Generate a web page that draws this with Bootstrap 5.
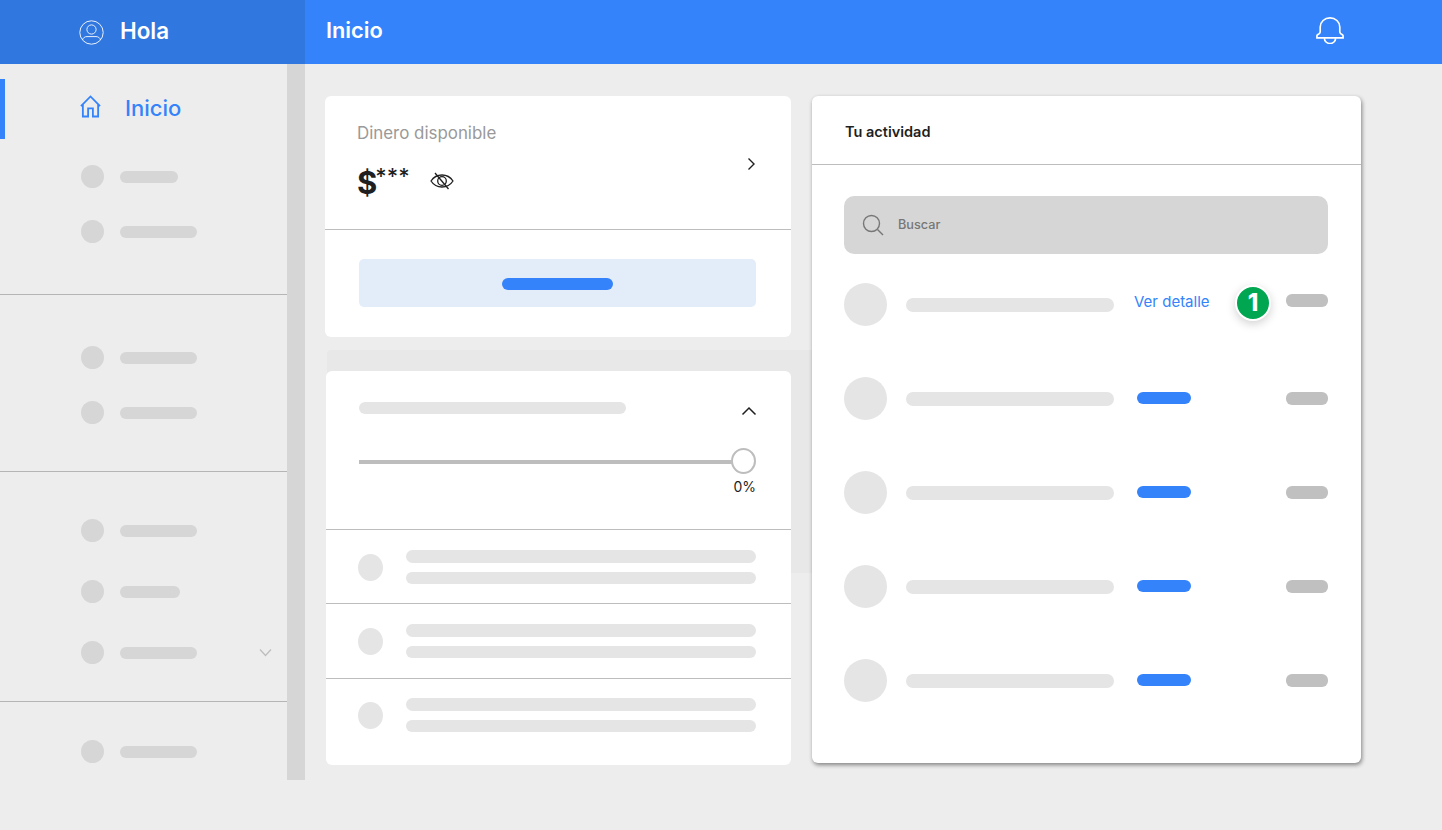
<!DOCTYPE html>
<html lang="es">
<head>
<meta charset="utf-8">
<title>Inicio</title>
<link href="https://cdn.jsdelivr.net/npm/bootstrap@5.3.0/dist/css/bootstrap.min.css" rel="stylesheet">
<style>
body{background:#ededed;font-family:"Inter","Liberation Sans",sans-serif;color:#1f1f1f;height:830px;overflow:hidden}
.topbar{height:64px;background:#3483fa;flex-wrap:nowrap;justify-content:flex-start}
.top-left{width:305px;height:64px;background:#3077e0;padding-left:79px;gap:16px}
.top-left span{font-size:22.4px;font-weight:600;color:#fff;line-height:26px;margin-bottom:2px}
.top-title{font-size:21.8px;font-weight:600;color:#fff;margin-left:21px;line-height:26px;margin-bottom:4px}
.bell{margin-left:auto;margin-right:98px;display:block;margin-bottom:3px}
.sidecol{width:305px;height:716px;flex:none}
.sidenav{width:287px}
.scrolltrack{width:18px;background:#d6d6d6}
.active-item{height:60px;margin-top:15px;border-left:5px solid #3483fa;padding-left:75px;color:#3483fa;font-size:22px;font-weight:500}
.active-item svg{margin-bottom:5px}
.active-item span{margin-left:24px;line-height:26px;margin-bottom:2px}
.side-sec{padding-left:81px;display:flex;flex-direction:column;border-bottom:1px solid #b5b5b5}
.side-sec:last-child{border-bottom:0}
.s1{padding-top:26px;padding-bottom:51px;gap:32px}
.s2{padding-top:51px;padding-bottom:47px;gap:32px}
.s3{padding-top:47px;padding-bottom:37px;gap:38px}
.s4{padding-top:38px}
.side-dot{width:23px;height:23px;border-radius:50%;background:#d6d6d6;flex:none}
.side-pill{height:12px;border-radius:6px;background:#d6d6d6;margin-left:16px}
.w58{width:58px}.w60{width:60px}.w77{width:77px}
.side-chev{position:absolute;left:178px;top:7px}
.maincol{padding:32px 0 0 20px}
.leftcol{width:466px;margin-right:21px;position:relative}
.leftcol::before{content:"";position:absolute;left:2px;top:254px;width:485px;height:223px;background:#e8e8e8;border-radius:4px 0 0 0}
.sheet{position:relative;background:#fff;border:0;border-radius:6px}
.sheet-a{height:241px}
.bal{height:134px;border-bottom:1px solid #bdbdbd;padding:27px 35px 0 32px;position:relative}
.bal-label{font-size:16.9px;line-height:20px;color:#999}
.bal-amount{margin-top:18px;line-height:36px;height:36px}
.bal-sign{font-size:31px;font-weight:700;color:#1f1f1f;line-height:36px;margin-top:7px}
.bal-stars{font-size:22px;font-weight:500;line-height:36px;align-self:flex-start;margin-top:-3px;margin-left:-2px}
.bal-eye{margin-left:20px;margin-top:3px}
.bal-chev{position:absolute;right:35px;top:61px}
.bal-foot{padding:29px 35px 0 34px}
.soft-btn{height:48px;background:#e3edf9;border:0;border-radius:5px;width:100%;display:flex;align-items:center;justify-content:center;padding:1px 0 0}
.blue-pill{background:#3483fa;border-radius:6px;height:12px;display:block}
.w110{width:111px}
.sheet-b{height:394px;margin-top:34px;margin-left:1px}
.goal{height:159px;padding:31px 35px 0 33px;position:relative;border-bottom:1px solid #bdbdbd}
.gray-pill{background:#e5e5e5;border-radius:7px;display:block}
.goal-title{width:267px;height:12px}
.goal-chev{position:absolute;left:415px;top:35px}
.track{height:4px;background:#bdbdbd;margin-top:46px;margin-right:23px;position:relative}
.thumb{position:absolute;left:372px;top:-12px;width:25px;height:26px;border:2px solid #bdbdbd;border-radius:50%;background:#fff}
.pct{font-size:14px;line-height:20px;margin-top:13px;color:#1f1f1f;text-align:right}
.goal-row{height:74px;padding:20px 35px 0 32px;border-bottom:1px solid #bdbdbd;background:transparent;border-radius:0}
.goal-row:nth-child(2){height:75px}
.goal-row:last-child{border-bottom:0;border-radius:0 0 6px 6px;padding-top:19px}
.oval{width:25px;height:27px;border-radius:50%;background:#e5e5e5;flex:none;margin-top:4px}
.lines{margin-left:23px;gap:9px}
.l13{height:13px}.l12{height:12px}
.sheet-c{width:549px;height:667px;box-shadow:1px 2px 4px rgba(0,0,0,.45)}
.act-head{height:69px;border-bottom:1px solid #bdbdbd;padding:27px 0 0 33px;font-size:14.5px;line-height:18px;font-weight:600;color:#1f1f1f}
.act-body{padding:31px 33px 0 32px;position:relative}
.searchbox{height:58px;background:#d6d6d6;border-radius:10px;padding-left:18px;margin-bottom:29px}
.searchbox span{font-size:12.7px;font-weight:500;color:#777;margin-left:14px;line-height:16px}
.act-row{height:43px;margin-bottom:51px;position:relative}
.round43{width:43px;height:43px;border-radius:50%;background:#e5e5e5;flex:none}
.act-line{width:208px;height:14px;margin-left:19px}
.act-blue{width:54px;height:12px;margin-left:23px;margin-bottom:1px}
.act-gray{width:42px;height:13px;border-radius:6px;background:#c0c0c0;margin-left:auto}
.up-gray{margin-bottom:8px}
.detail{font-size:15px;line-height:20px;color:#3483fa;margin-left:20px;margin-bottom:5px;text-decoration:none}
.step{position:absolute;left:391px;top:2px;width:36px;height:36px;border-radius:50%;background:#00a650;border:2px solid #fff;color:#fff;font-size:24px;font-weight:800;line-height:31px;text-align:center;box-shadow:0 3px 10px rgba(0,0,0,.18)}
</style>
</head>
<body>
<nav class="navbar topbar p-0">
  <div class="top-left d-flex align-items-center">
    <svg width="25" height="25" viewBox="0 0 25 25" fill="none" stroke="#fff" stroke-width="1" opacity=".9"><circle cx="12.5" cy="12.5" r="11.7"/><circle cx="12.5" cy="9.5" r="4.6"/><path d="M3.5 20c.6-2.4 2.400-3.400 4.500-3.400h9c2.100 0 3.900 1 4.500 3.400"/></svg>
    <span>Hola</span>
  </div>
  <div class="top-title">Inicio</div>
  <svg class="bell" width="28" height="27" viewBox="0 0 30 31" preserveAspectRatio="none" fill="none" stroke="#fff" stroke-width="1.800"><path d="M4.500 17V11.500a10.500 10.500 0 0 1 21 0V17c0 1 .5 1.700 1.300 2.300.9.700 2.200 1.300 2.200 2.200v2.500H1v-2.500c0-.9 1.300-1.500 2.200-2.200.8-.6 1.300-1.300 1.300-2.300z"/><path d="M9 24.500a6 6 0 0 0 12 0"/></svg>
</nav>
<div class="d-flex">
  <aside class="sidecol d-flex">
    <div class="sidenav">
      <div class="active-item d-flex align-items-center">
        <svg width="21" height="23" viewBox="0 0 22 24" fill="none" stroke="#3483fa" stroke-width="1.900"><path d="M1 11.500 11 1.500l10 10"/><path d="M3 9.800V22.500h5.500V14h5v8.500H19V9.800"/></svg>
        <span>Inicio</span>
      </div>
      <div class="side-sec s1">
        <div class="d-flex align-items-center"><i class="side-dot"></i><i class="side-pill w58"></i></div>
        <div class="d-flex align-items-center"><i class="side-dot"></i><i class="side-pill w77"></i></div>
      </div>
      <div class="side-sec s2">
        <div class="d-flex align-items-center"><i class="side-dot"></i><i class="side-pill w77"></i></div>
        <div class="d-flex align-items-center"><i class="side-dot"></i><i class="side-pill w77"></i></div>
      </div>
      <div class="side-sec s3">
        <div class="d-flex align-items-center"><i class="side-dot"></i><i class="side-pill w77"></i></div>
        <div class="d-flex align-items-center"><i class="side-dot"></i><i class="side-pill w60"></i></div>
        <div class="d-flex align-items-center position-relative"><i class="side-dot"></i><i class="side-pill w77"></i>
          <svg class="side-chev" width="13" height="9" viewBox="0 0 13 9" fill="none" stroke="#bdbdbd" stroke-width="1.200"><path d="M1 1.500l5.500 6 5.500-6"/></svg>
        </div>
      </div>
      <div class="side-sec s4">
        <div class="d-flex align-items-center"><i class="side-dot"></i><i class="side-pill w77"></i></div>
      </div>
    </div>
    <div class="scrolltrack"></div>
  </aside>
  <main class="maincol d-flex align-items-start">
    <div class="leftcol">
      <section class="card sheet sheet-a">
        <div class="bal">
          <div class="bal-label">Dinero disponible</div>
          <div class="bal-amount d-flex align-items-center">
            <span class="bal-sign">$</span><span class="bal-stars">***</span>
            <svg class="bal-eye" width="24" height="20" viewBox="0 0 24 20" fill="none" stroke="#1f1f1f" stroke-width="1.300"><path d="M1 10c2.500-3.800 6.300-6 11-6s8.500 2.200 11 6c-2.500 3.800-6.300 6-11 6S3.500 13.800 1 10z"/><circle cx="12" cy="10" r="4.300"/><path d="M5 2l13.500 16"/></svg>
          </div>
          <svg class="bal-chev" width="9" height="14" viewBox="0 0 9 14" fill="none" stroke="#1f1f1f" stroke-width="1.400"><path d="M1.500 1.500l5.500 5.500-5.500 5.500"/></svg>
        </div>
        <div class="bal-foot"><button class="soft-btn" type="button" aria-label="Acción"><span class="blue-pill w110"></span></button></div>
      </section>
      <section class="card sheet sheet-b">
        <div class="goal">
          <span class="gray-pill goal-title"></span>
          <svg class="goal-chev" width="16" height="10" viewBox="0 0 16 10" fill="none" stroke="#1f1f1f" stroke-width="1.500"><path d="M1.500 8.500 8 2l6.500 6.500"/></svg>
          <div class="track"><i class="thumb"></i></div>
          <div class="pct">0%</div>
        </div>
        <div class="list-group list-group-flush">
          <div class="list-group-item goal-row d-flex">
            <i class="oval"></i>
            <div class="lines d-flex flex-column flex-grow-1"><span class="gray-pill l13"></span><span class="gray-pill l12"></span></div>
          </div>
          <div class="list-group-item goal-row d-flex">
            <i class="oval"></i>
            <div class="lines d-flex flex-column flex-grow-1"><span class="gray-pill l13"></span><span class="gray-pill l12"></span></div>
          </div>
          <div class="list-group-item goal-row d-flex">
            <i class="oval"></i>
            <div class="lines d-flex flex-column flex-grow-1"><span class="gray-pill l13"></span><span class="gray-pill l12"></span></div>
          </div>
        </div>
      </section>
    </div>
    <section class="card sheet sheet-c">
      <div class="act-head">Tu actividad</div>
      <div class="act-body">
        <div class="searchbox d-flex align-items-center">
          <svg width="22" height="22" viewBox="0 0 22 22" fill="none" stroke="#777" stroke-width="1.400"><circle cx="9.500" cy="9.500" r="8"/><path d="M15.500 15.500l5.500 5.500"/></svg>
          <span>Buscar</span>
        </div>
        <div class="act-row d-flex align-items-center">
          <i class="round43"></i><span class="gray-pill act-line"></span>
          <a class="detail" href="#">Ver detalle</a>
          <span class="step">1</span>
          <span class="act-gray up-gray"></span>
        </div>
        <div class="act-row d-flex align-items-center"><i class="round43"></i><span class="gray-pill act-line"></span><span class="blue-pill act-blue"></span><span class="act-gray"></span></div>
        <div class="act-row d-flex align-items-center"><i class="round43"></i><span class="gray-pill act-line"></span><span class="blue-pill act-blue"></span><span class="act-gray"></span></div>
        <div class="act-row d-flex align-items-center"><i class="round43"></i><span class="gray-pill act-line"></span><span class="blue-pill act-blue"></span><span class="act-gray"></span></div>
        <div class="act-row d-flex align-items-center"><i class="round43"></i><span class="gray-pill act-line"></span><span class="blue-pill act-blue"></span><span class="act-gray"></span></div>
      </div>
    </section>
  </main>
</div>
<script src="https://cdn.jsdelivr.net/npm/bootstrap@5.3.0/dist/js/bootstrap.bundle.min.js"></script>
</body>
</html>
